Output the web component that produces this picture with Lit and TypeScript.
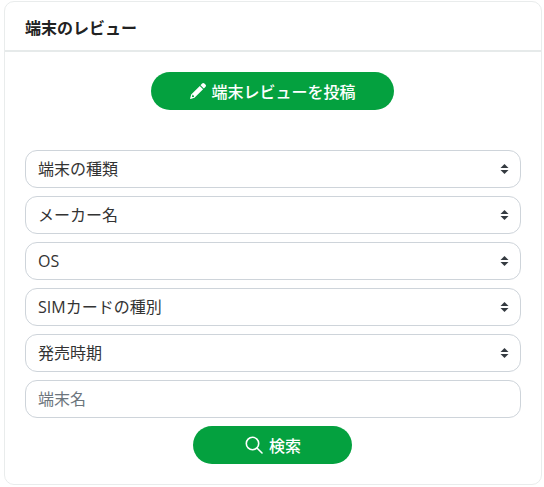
import { LitElement, html, css } from 'lit';
import { customElement } from 'lit/decorators.js';

const FILTERS = ['端末の種類', 'メーカー名', 'OS', 'SIMカードの種別', '発売時期'];

@customElement('app-root')
export class AppRoot extends LitElement {
  static styles = css`
    :host {
      display: block;
      padding: 1px 2px 2px 4px;
      font-family: 'Open Sans', 'Noto Sans CJK JP', sans-serif;
      color: #333;
    }

    .card {
      border: 1px solid #e9ecec;
      border-radius: 10px;
      background: #fff;
    }

    .card-header {
      padding: 14px 20px 0;
      height: 50px;
      box-sizing: border-box;
      border-bottom: 2px solid #e6eaea;
      font-size: 16px;
      line-height: 24px;
      font-weight: 700;
      color: #222;
    }

    .card-body {
      display: flex;
      flex-direction: column;
      align-items: center;
      padding: 20px 20px 20px;
    }

    .btn {
      display: flex;
      align-items: center;
      justify-content: center;
      gap: 5px;
      height: 38px;
      border: none;
      border-radius: 19px;
      background: #04a13f;
      color: #fff;
      font: inherit;
      font-size: 16px;
      font-weight: 500;
      padding: 0 0 1px 2px;
      margin-right: 2px;
    }

    .btn.post {
      width: 243px;
      margin-bottom: 40px;
    }

    .btn.search {
      width: 159px;
      gap: 6px;
      margin-top: 8px;
    }

    .field {
      position: relative;
      width: 100%;
      margin-bottom: 8px;
    }

    select,
    input {
      display: block;
      width: 100%;
      height: 38px;
      box-sizing: border-box;
      border: 1px solid #ced4da;
      border-radius: 12px;
      background: #fff;
      padding: 0 12px;
      font: inherit;
      font-size: 16px;
      color: #333;
      appearance: none;
      outline: none;
    }

    input {
      margin: 0;
    }

    input::placeholder {
      color: #6c757d;
      opacity: 1;
    }

    .arrows {
      position: absolute;
      right: 12px;
      top: 14px;
      width: 9px;
      height: 10px;
      pointer-events: none;
    }

    .last {
      margin-bottom: 0;
    }
  `;

  render() {
    return html`
      <div class="card">
        <div class="card-header">端末のレビュー</div>
        <div class="card-body">
          <button class="btn post">
            <svg width="16" height="16" viewBox="0 0 16 16" fill="#fff">
              <path d="M12.1.6a1.6 1.6 0 0 1 2.3 0l1 1a1.6 1.6 0 0 1 0 2.3l-1.6 1.6-3.3-3.3zM9.8 2.9l3.3 3.3-8.6 8.6-3.9 1.1a.4.4 0 0 1-.5-.5l1.1-3.9zM2.6 11.6l-.7 2.5 2 .0.1-1.1z" />
            </svg>
            端末レビューを投稿
          </button>
          ${FILTERS.map(
            (f) => html`
              <div class="field">
                <select>
                  <option>${f}</option>
                </select>
                <svg class="arrows" viewBox="0 0 9 10" fill="#343a40">
                  <path d="M4.5 0 8.5 4H.5zM4.5 10 .5 6h8z" />
                </svg>
              </div>
            `,
          )}
          <div class="field last">
            <input type="text" placeholder="端末名" />
          </div>
          <button class="btn search">
            <svg width="18" height="18" viewBox="0 0 18 18" fill="none" stroke="#fff" stroke-width="1.6" stroke-linecap="round">
              <circle cx="7.5" cy="7.5" r="6.2" />
              <path d="M12.2 12.2 17 17" />
            </svg>
            検索
          </button>
        </div>
      </div>
    `;
  }
}
